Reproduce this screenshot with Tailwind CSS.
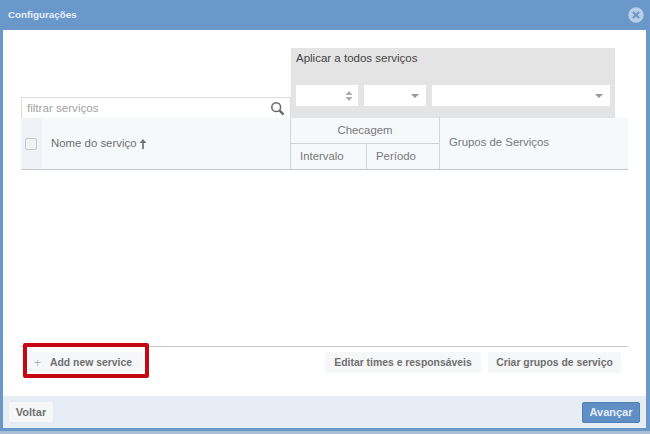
<!DOCTYPE html>
<html lang="en">
<head>
    <meta charset="UTF-8">
    <title>Configurações</title>
    <script src="https://cdn.jsdelivr.net/npm/@tailwindcss/browser@4"></script>
</head>
<body class="bg-white font-['Liberation_Sans',Arial,sans-serif]">
    <div class="w-[650px] h-[434px] overflow-hidden flex flex-col bg-[#6b98cb] pl-[3px] pr-[4px] pb-[3px] border-b-[3px] border-[#a9bdd3]">
        <!-- title bar -->
        <div class="h-[30px] shrink-0 flex items-center justify-between pl-[5px] pr-[2px] -mb-px">
            <span class="text-[9.8px] font-bold text-[#e6eef8]">Configurações</span>
            <svg class="w-[16px] h-[16px]" viewBox="0 0 15 15">
                <circle cx="7.5" cy="7.5" r="7.2" fill="#b9cfe8"/>
                <path d="M4.6 4.6l5.8 5.8M10.4 4.6l-5.8 5.8" stroke="#6b98cb" stroke-width="2"/>
            </svg>
        </div>

        <div class="flex-1 flex flex-col bg-white min-h-0 mt-px">
            <div class="flex-1 flex flex-col pl-[18px] pr-[18px]">
                <!-- filter and bulk apply -->
                <div class="h-[88px] shrink-0 flex items-end">
                    <div class="w-[270px] h-[21px] flex items-center justify-between border border-[#dcdcdc] border-b-0 pl-[5px] pr-[5px]">
                        <span class="text-[11.6px] text-[#a3a3a3]">filtrar serviços</span>
                        <svg class="w-[15px] h-[15px]" viewBox="0 0 15 15" fill="none" stroke="#666" stroke-width="1.5">
                            <circle cx="6.2" cy="6.2" r="4.4"/>
                            <path d="M9.6 9.6l4 4" stroke-width="2.2"/>
                        </svg>
                    </div>
                    <div class="w-[324px] h-[70px] bg-[#e4e4e4] pl-[5px] pr-[5px] flex flex-col justify-between pb-[12px]">
                        <div class="text-[11.5px] text-[#444] leading-[20px]">Aplicar a todos serviços</div>
                        <div class="flex gap-[6px] h-[21px]">
                            <div class="w-[62px] bg-white flex items-center justify-end pr-[3px]">
                                <svg class="w-[12px] h-[14px]" viewBox="0 0 12 14" fill="#aaa"><path d="M6 2l3.5 4h-7zM6 12l3.5-4h-7z"/></svg>
                            </div>
                            <div class="w-[62px] bg-white flex items-center justify-end pr-[6px]">
                                <svg class="w-[10px] h-[6px]" viewBox="0 0 10 6" fill="#999"><path d="M1 1h8L5 5z"/></svg>
                            </div>
                            <div class="w-[178px] bg-white flex items-center justify-end pr-[6px]">
                                <svg class="w-[10px] h-[6px]" viewBox="0 0 10 6" fill="#999"><path d="M1 1h8L5 5z"/></svg>
                            </div>
                        </div>
                    </div>
                </div>

                <!-- table header -->
                <div class="h-[52px] shrink-0 flex bg-[#f6f9fc] border-b border-[#c4c8cc] text-[11.4px] text-[#777]">
                    <div class="w-[21px] bg-[#eff3f8] flex items-center pl-[4px]">
                        <div class="w-[12px] h-[12px] rounded-[2px] border border-[#c9c9c9] bg-[#f2f2f2]"></div>
                    </div>
                    <div class="w-[248px] flex items-center pl-[9px] gap-[3px] text-[#6e6e6e]">
                        Nome do serviço
                        <svg class="w-[8px] h-[10px]" viewBox="0 0 9 11" fill="#777"><path d="M4.5 0L8.5 4.5H5.5V11H3.5V4.5H.5z"/></svg>
                    </div>
                    <div class="w-[149px] flex flex-col border-l border-[#d4d7da]">
                        <div class="h-[26px] flex items-center justify-center border-b border-[#d0d3d6]">Checagem</div>
                        <div class="flex-1 flex">
                            <div class="w-[76px] flex items-center pl-[9px] border-r border-[#d4d7da]">Intervalo</div>
                            <div class="flex-1 flex items-center pl-[9px]">Período</div>
                        </div>
                    </div>
                    <div class="flex-1 flex items-center pl-[9px] border-l border-[#d4d7da] -mt-px">Grupos de Serviços</div>
                </div>

                <div class="flex-1"></div>

                <!-- actions -->
                <div class="relative h-[50px] shrink-0 border-t border-[#c4c8cc] flex items-start justify-between pt-[5px] pl-[7px] pr-[7px] text-[10.4px] font-bold text-[#6f6f6f]">
                    <div class="w-[115px] h-[21px] flex items-center bg-[#f5f7f9] rounded-[2px] pl-[6px] gap-[9px]">
                        <span class="text-[#b5b5b5] font-normal text-[12px]">+</span>
                        <span>Add new service</span>
                    </div>
                    <div class="flex gap-[7px]">
                        <div class="h-[21px] w-[156px] flex items-center justify-center bg-[#f5f7f9] rounded-[2px]">Editar times e responsáveis</div>
                        <div class="h-[21px] w-[133px] flex items-center justify-center bg-[#f5f7f9] rounded-[2px]">Criar grupos de serviço</div>
                    </div>
                    <div class="absolute left-[2px] top-[-4px] w-[126px] h-[35px] border-[4px] border-[#c40712] rounded-[2px]"></div>
                </div>
            </div>

            <!-- footer -->
            <div class="h-[32px] shrink-0 bg-[#e6edf5] flex items-center justify-between pl-[6px] pr-[6px]">
                <div class="h-[20px] w-[44px] flex items-center justify-center bg-[#f5f7f9] rounded-[2px] text-[11px] font-bold text-[#6f6f6f]">Voltar</div>
                <div class="h-[21px] w-[58px] flex items-center justify-center bg-[#5f8fc5] border border-[#4f7fb3] rounded-[2px] text-[11px] font-bold text-[#e6eef8]">Avançar</div>
            </div>
        </div>
    </div>
</body>
</html>
